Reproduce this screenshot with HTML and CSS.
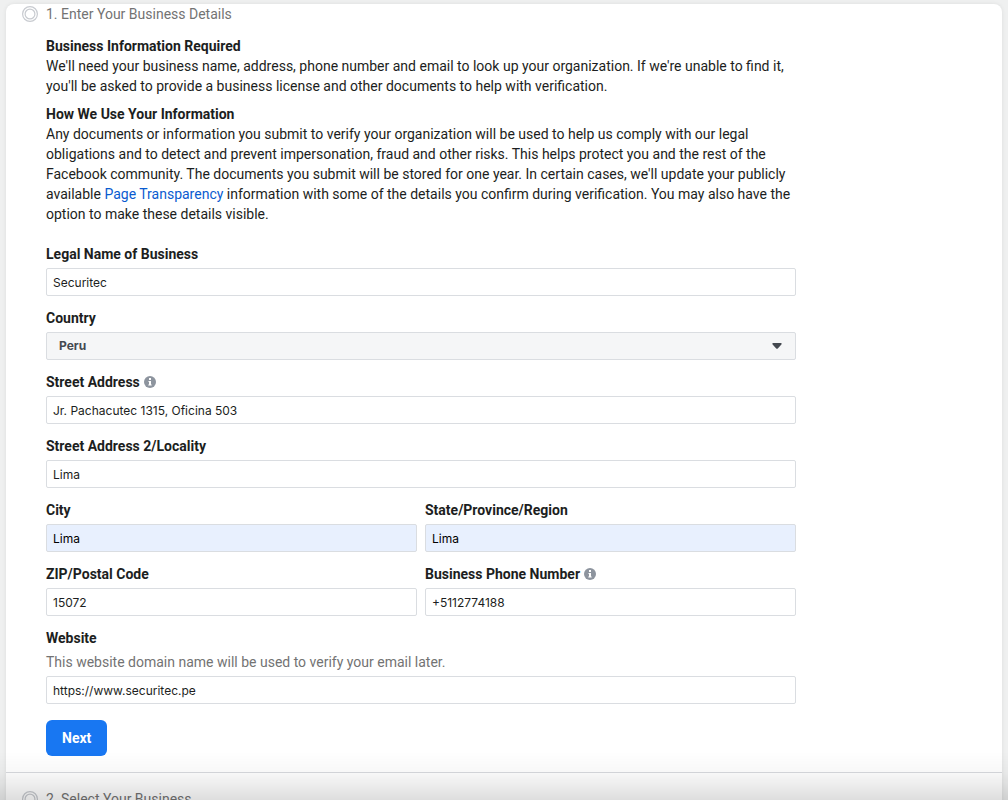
FILE: index.html
```html
<!DOCTYPE html>
<html lang="en">
<head>
<meta charset="utf-8">
<meta name="viewport" content="width=device-width, initial-scale=1">
<title>Business Verification</title>
<link rel="stylesheet" href="styles.css">
</head>
<body>
<main class="card">
  <section class="step">
    <header class="step-header">
      <svg class="step-icon" viewBox="0 0 16 16" aria-hidden="true"><circle cx="8" cy="8" r="7.4"/><circle cx="8" cy="8" r="4.9"/></svg>
      <h1 class="step-title">1. Enter Your Business Details</h1>
    </header>
    <div class="step-body">
      <div class="info">
        <h2 class="info-title">Business Information Required</h2>
        <p class="info-text">We'll need your business name, address, phone number and email to look up your organization. If we're unable to find it, you'll be asked to provide a business license and other documents to help with verification.</p>
      </div>
      <div class="info">
        <h2 class="info-title">How We Use Your Information</h2>
        <p class="info-text">Any documents or information you submit to verify your organization will be used to help us comply with our legal obligations and to detect and prevent impersonation, fraud and other risks. This helps protect you and the rest of the Facebook community. The documents you submit will be stored for one year. In certain cases, we'll update your publicly available <a class="link" href="#">Page Transparency</a> information with some of the details you confirm during verification. You may also have the option to make these details visible.</p>
      </div>
      <form class="form">
        <div class="field">
          <label class="label" for="legal-name">Legal Name of Business</label>
          <input class="input" id="legal-name" type="text" value="Securitec">
        </div>
        <div class="field">
          <label class="label" for="country">Country</label>
          <div class="select-wrap">
            <select class="select" id="country"><option>Peru</option></select>
            <svg class="select-arrow" viewBox="0 0 10 6" aria-hidden="true"><path d="M1.200 0h7.600c.9 0 1.200.9.6 1.500L6 5.200a1.400 1.400 0 0 1-2 0L.6 1.500C0 .9.300 0 1.200 0z"/></svg>
          </div>
        </div>
        <div class="field">
          <div class="label-row">
            <label class="label" for="street">Street Address</label>
            <svg class="info-icon" viewBox="0 0 12 12" aria-hidden="true"><circle cx="6" cy="6" r="6"/><path d="M5 2h2v2H5zM4.500 5H7v3.600h.7v1H4.300v-1H5V6h-.5z"/></svg>
          </div>
          <input class="input" id="street" type="text" value="Jr. Pachacutec 1315, Oficina 503">
        </div>
        <div class="field">
          <label class="label" for="street2">Street Address 2/Locality</label>
          <input class="input" id="street2" type="text" value="Lima">
        </div>
        <div class="field-pair">
          <div class="field">
            <label class="label" for="city">City</label>
            <input class="input input-autofilled" id="city" type="text" value="Lima">
          </div>
          <div class="field">
            <label class="label" for="state">State/Province/Region</label>
            <input class="input input-autofilled" id="state" type="text" value="Lima">
          </div>
        </div>
        <div class="field-pair">
          <div class="field">
            <label class="label" for="zip">ZIP/Postal Code</label>
            <input class="input" id="zip" type="text" value="15072">
          </div>
          <div class="field">
            <div class="label-row">
              <label class="label" for="phone">Business Phone Number</label>
              <svg class="info-icon" viewBox="0 0 12 12" aria-hidden="true"><circle cx="6" cy="6" r="6"/><path d="M5 2h2v2H5zM4.500 5H7v3.600h.7v1H4.300v-1H5V6h-.5z"/></svg>
            </div>
            <input class="input" id="phone" type="tel" value="+5112774188">
          </div>
        </div>
        <div class="field">
          <label class="label" for="website">Website</label>
          <p class="hint" id="website-hint">This website domain name will be used to verify your email later.</p>
          <input class="input" id="website" type="url" value="https://www.securitec.pe" aria-describedby="website-hint">
        </div>
        <button class="button" type="button">Next</button>
      </form>
    </div>
  </section>
  <section class="step step-next">
    <header class="step-header">
      <svg class="step-icon" viewBox="0 0 16 16" aria-hidden="true"><circle cx="8" cy="8" r="7.4"/><circle cx="8" cy="8" r="4.9"/></svg>
      <h1 class="step-title">2. Select Your Business</h1>
    </header>
  </section>
</main>
<div class="page-fade"></div>
</body>
</html>
```

FILE: styles.css
```css
* {
  box-sizing: border-box;
}

body {
  margin: 0;
  height: 100vh;
  overflow: hidden;
  padding: 4px 6px 0;
  background: #eff0f0;
  color: #1c1e21;
  font-family: Roboto, "Liberation Sans", sans-serif;
  font-size: 14px;
  line-height: 20px;
}

h1,
h2,
p {
  margin: 0;
  font-size: 14px;
}

.card {
  background: #fff;
  border-radius: 8px;
  box-shadow: 0 0 4px rgba(0, 0, 0, 0.08);
}

.step {
  padding: 0 16px 16px;
}

.step-next {
  padding-top: 16px;
  border-top: 1px solid #d8dade;
}

.step-header {
  display: flex;
  align-items: center;
  gap: 8px;
}

.step-icon {
  width: 16px;
  height: 16px;
  fill: none;
  stroke: #c8cbd0;
  stroke-width: 1.2;
}

.step-title {
  color: #737373;
  font-weight: 400;
}

.step-body {
  display: flex;
  flex-direction: column;
  gap: 8px;
  max-width: 774px;
  padding: 12px 0 0 24px;
}

.info-title,
.label {
  font-weight: 700;
}

.link {
  color: #0a5bd0;
  text-decoration: none;
}

.form {
  display: flex;
  flex-direction: column;
  gap: 12px;
  padding-top: 12px;
}

.field {
  display: flex;
  flex-direction: column;
  gap: 4px;
}

.field-pair {
  display: grid;
  grid-template-columns: 1fr 1fr;
  gap: 8px;
}

.label-row {
  display: flex;
  align-items: center;
  gap: 4px;
}

.info-icon {
  width: 12px;
  height: 12px;
  fill: #8d949e;
}

.info-icon path {
  fill: #fff;
}

.input,
.select {
  width: 100%;
  height: 28px;
  margin: 0;
  padding: 0 6px;
  border: 1px solid #dadde1;
  border-radius: 2px;
  background: #fff;
  color: #1c1e21;
  font-family: Inter, "Liberation Sans", sans-serif;
  font-size: 12px;
}

.input-autofilled {
  background: #e8f0fe;
  color: #000;
}

.select-wrap {
  position: relative;
}

.select {
  display: block;
  padding: 0 12px 1px;
  appearance: none;
  background: #f5f6f7;
  color: #444950;
  font-weight: 700;
}

.select-arrow {
  position: absolute;
  top: 11px;
  right: 14px;
  width: 10px;
  height: 6px;
  fill: #444950;
  pointer-events: none;
}

.hint {
  color: #737373;
}

.button {
  align-self: flex-start;
  height: 36px;
  margin-top: 4px;
  padding: 0 16px;
  border: 0;
  border-radius: 6px;
  background: #1877f2;
  color: #fff;
  font: 700 14px/20px Roboto, "Liberation Sans", sans-serif;
}

.page-fade {
  position: fixed;
  right: 0;
  bottom: 0;
  left: 0;
  height: 48px;
  background: linear-gradient(rgba(0, 0, 0, 0), rgba(0, 0, 0, 0.03) 45%, rgba(0, 0, 0, 0.13));
  pointer-events: none;
}
```
